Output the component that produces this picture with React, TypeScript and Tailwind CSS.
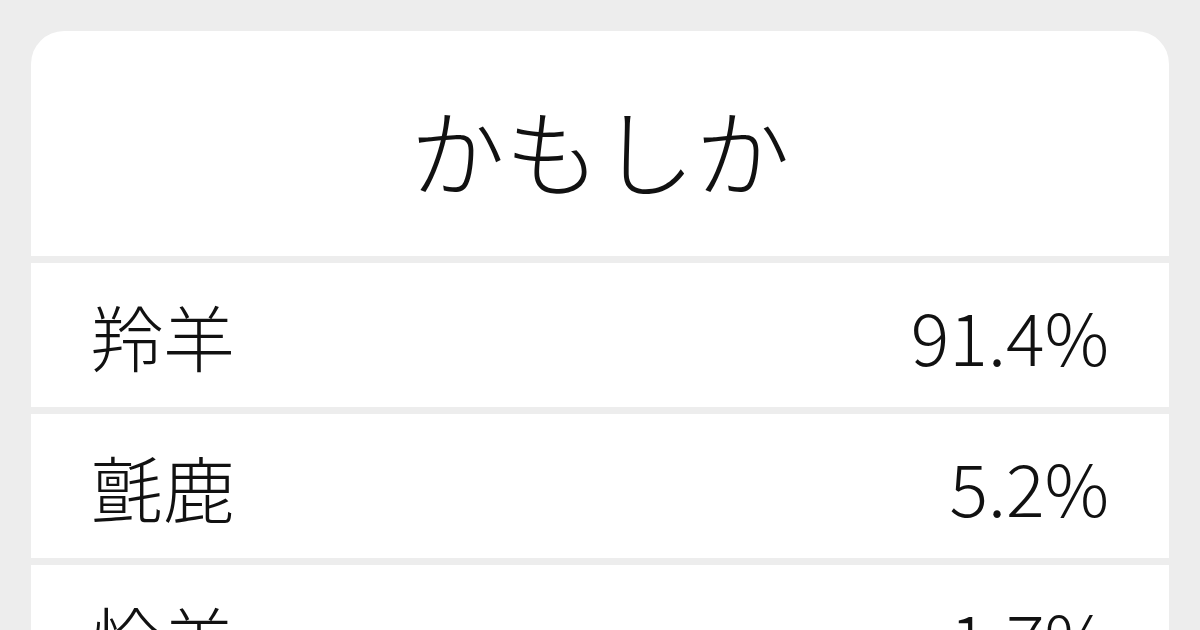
import React from "react";

const rows = [
  { label: "羚羊", value: "91.4%" },
  { label: "氈鹿", value: "5.2%" },
  { label: "怜羊", value: "1.7%" },
];

export default function App() {
  return (
    <div
      className="w-[1200px] h-[630px] overflow-hidden bg-[#ededed] pt-[31px] px-[31px] text-[#111111] font-light"
      style={{ fontFamily: '"Noto Sans CJK JP", "Noto Sans", sans-serif' }}
    >
      <div className="rounded-t-[33px] overflow-hidden flex flex-col gap-[7px]">
        <div className="h-[225px] bg-white flex items-center justify-center pt-[10px] text-[95px] leading-none">
          かもしか
        </div>
        {rows.map((r) => (
          <div
            key={r.label}
            className="h-[144px] shrink-0 bg-white flex items-center justify-between px-[60px] text-[72px] leading-none"
          >
            <span>{r.label}</span>
            <span>{r.value}</span>
          </div>
        ))}
      </div>
    </div>
  );
}
